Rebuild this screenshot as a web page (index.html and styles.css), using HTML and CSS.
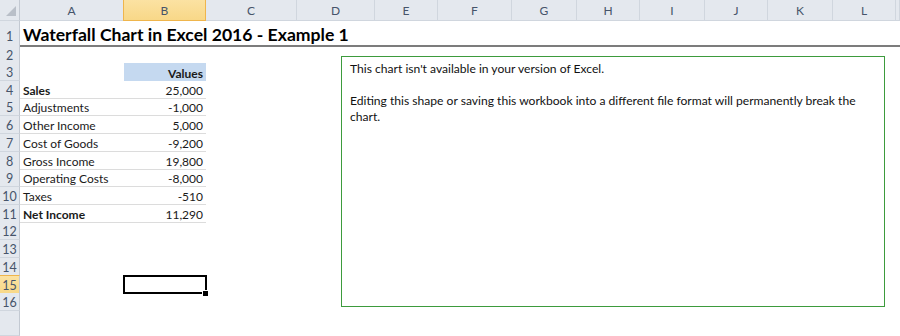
FILE: index.html
```html
<!DOCTYPE html>
<html lang="en">
<head>
  <meta charset="UTF-8" />
  <title>Waterfall Chart in Excel 2016 - Example 1</title>
  <link rel="stylesheet" href="styles.css">
</head>
<body>
  <div class="sheet">
    <div class="col-heads">
      <div class="corner">
        <svg width="20" height="20" viewBox="0 0 20 20"><polygon points="16,6 16,16 6,16" fill="#b9bfc8"/></svg>
      </div>
      <div class="col-head">A</div>
      <div class="col-head active">B</div>
      <div class="col-head">C</div>
      <div class="col-head">D</div>
      <div class="col-head">E</div>
      <div class="col-head">F</div>
      <div class="col-head">G</div>
      <div class="col-head">H</div>
      <div class="col-head">I</div>
      <div class="col-head">J</div>
      <div class="col-head">K</div>
      <div class="col-head">L</div>
      <div class="col-head"></div>
    </div>

    <div class="row title-row">
      <div class="row-head">1</div>
      <div class="cell title">Waterfall Chart in Excel 2016 - Example 1</div>
    </div>
    <div class="row short">
      <div class="row-head">2</div>
      <div class="cell"></div>
    </div>
    <div class="row">
      <div class="row-head">3</div>
      <div class="cell"></div>
      <div class="cell num head-fill">Values</div>
      <div class="cell"></div>
    </div>
    <div class="row">
      <div class="row-head">4</div>
      <div class="cell line bold">Sales</div>
      <div class="cell line num">25,000</div>
      <div class="cell"></div>
    </div>
    <div class="row">
      <div class="row-head">5</div>
      <div class="cell line">Adjustments</div>
      <div class="cell line num">-1,000</div>
      <div class="cell"></div>
    </div>
    <div class="row">
      <div class="row-head">6</div>
      <div class="cell line">Other Income</div>
      <div class="cell line num">5,000</div>
      <div class="cell"></div>
    </div>
    <div class="row">
      <div class="row-head">7</div>
      <div class="cell line">Cost of Goods</div>
      <div class="cell line num">-9,200</div>
      <div class="cell"></div>
    </div>
    <div class="row">
      <div class="row-head">8</div>
      <div class="cell line">Gross Income</div>
      <div class="cell line num">19,800</div>
      <div class="cell"></div>
    </div>
    <div class="row">
      <div class="row-head">9</div>
      <div class="cell line">Operating Costs</div>
      <div class="cell line num">-8,000</div>
      <div class="cell"></div>
    </div>
    <div class="row">
      <div class="row-head">10</div>
      <div class="cell line">Taxes</div>
      <div class="cell line num">-510</div>
      <div class="cell"></div>
    </div>
    <div class="row">
      <div class="row-head">11</div>
      <div class="cell line bold">Net Income</div>
      <div class="cell line num">11,290</div>
      <div class="cell"></div>
    </div>
    <div class="row">
      <div class="row-head">12</div>
      <div class="cell"></div>
    </div>
    <div class="row">
      <div class="row-head">13</div>
      <div class="cell"></div>
    </div>
    <div class="row">
      <div class="row-head">14</div>
      <div class="cell"></div>
    </div>
    <div class="row">
      <div class="row-head active">15</div>
      <div class="cell"></div>
      <div class="cell selected"></div>
      <div class="cell"></div>
    </div>
    <div class="row">
      <div class="row-head">16</div>
      <div class="cell"></div>
    </div>
    <div class="row filler">
      <div class="row-head"></div>
      <div class="cell"></div>
    </div>

    <div class="chart-stub">
      <p>This chart isn't available in your version of Excel.</p>
      <p>Editing this shape or saving this workbook into a different file format will permanently break the chart.</p>
    </div>
  </div>
</body>
</html>
```
FILE: styles.css
```css
:root {
  --head-bg: #e4e8ee;
  --head-line: #d0d6de;
  --head-text: #46546a;
  --pick: #f8d888;
  --pick-line: #efb54c;
}
html, body {
  margin: 0;
  padding: 0;
  height: 100%;
  overflow: hidden;
  background: #fff;
}
body {
  font-family: Lato, 'Noto Sans', Arial, sans-serif;
  font-size: 12px;
  color: #1a1a1a;
}
.sheet {
  position: relative;
  display: flex;
  flex-direction: column;
  height: 100vh;
}
.col-heads {
  display: grid;
  grid-template-columns: 20px 104px 82px 91px 78px 63px 74px 65px 63px 65px 63px 65px 63px 1fr;
  height: 21px;
  flex: none;
}
.corner {
  background: var(--head-bg);
  border-right: 1px solid #c3c9d2;
  border-bottom: 1px solid var(--head-line);
  box-sizing: border-box;
}
.corner svg {
  display: block;
}
.col-head {
  background: var(--head-bg);
  border-right: 1px solid var(--head-line);
  border-bottom: 1px solid var(--head-line);
  box-sizing: border-box;
  display: flex;
  align-items: center;
  justify-content: center;
  color: var(--head-text);
  padding-top: 1px;
}
.col-head.active {
  background: linear-gradient(#fbe2a2, var(--pick));
  border-color: var(--pick-line);
  border-left: 1px solid var(--pick-line);
  margin-left: -1px;
}
.row {
  display: grid;
  grid-template-columns: 20px 104px 82px 1fr;
  height: 17.72px;
  flex: none;
}
.row.short {
  height: 17px;
}
.row.title-row {
  height: 25px;
  grid-template-columns: 20px 1fr;
}
.row.filler {
  flex: 1;
}
.row-head {
  background: var(--head-bg);
  border-right: 1px solid #c3c9d2;
  border-bottom: 1px solid var(--head-line);
  box-sizing: border-box;
  display: flex;
  align-items: center;
  justify-content: center;
  color: var(--head-text);
  font-size: 12.5px;
  padding-top: 2px;
}
.row-head.active {
  background: linear-gradient(#fbe2a2, var(--pick));
  border-bottom-color: var(--pick-line);
  border-top: 1px solid var(--pick-line);
  margin-top: -1px;
}
.title-row .row-head {
  padding-top: 5px;
}
.cell {
  display: flex;
  align-items: center;
  padding: 2px 3px 0 3px;
  white-space: nowrap;
  box-sizing: border-box;
  min-width: 0;
}
.cell.title {
  font-size: 17.6px;
  font-weight: 700;
  color: #000;
  border-bottom: 2px solid #7c7c7c;
  padding-top: 3px;
}
.cell.num {
  justify-content: flex-end;
}
.cell.bold {
  font-weight: 700;
}
.cell.head-fill {
  background: #c5d9f0;
  font-weight: 700;
}
.cell.line {
  border-bottom: 1px solid #dcdcdc;
}
.cell.selected {
  position: relative;
}
.cell.selected::after {
  content: "";
  position: absolute;
  inset: -1px -1px 0 -1px;
  border: 2px solid #000;
}
.cell.selected::before {
  content: "";
  position: absolute;
  right: -3px;
  bottom: -3px;
  width: 5px;
  height: 5px;
  background: #000;
  border: 1px solid #fff;
  z-index: 1;
}
.chart-stub {
  position: absolute;
  left: 341px;
  top: 56px;
  width: 544px;
  height: 251px;
  box-sizing: border-box;
  border: 1px solid #3d9b3d;
  background: #fff;
  padding: 4px 8px;
  line-height: 16px;
  font-size: 12.1px;
  color: #111;
}
.chart-stub p {
  margin: 0 0 16px 0;
}
```
